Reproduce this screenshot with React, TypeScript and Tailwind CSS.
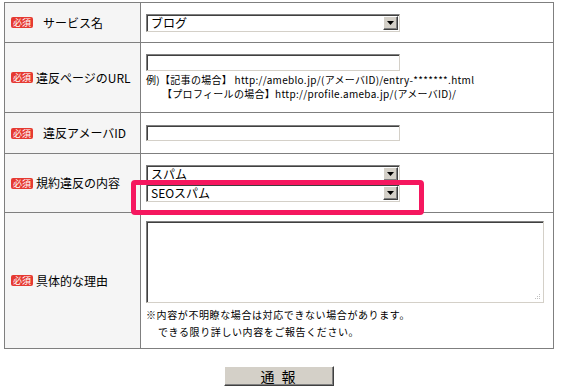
import React from 'react';

const font = "font-['Noto_Sans_CJK_JP','Noto_Sans_CJK_SC',sans-serif]";

const Badge = () => (
  <span className="inline-block bg-[#e63a32] text-white text-[9px] leading-[11px] h-[11px] px-[2px] rounded-[2px] align-middle">
    必須
  </span>
);

const Arrow = () => (
  <div className="w-[15px] h-[14px] bg-[#d4d0c8] border border-t-white border-l-white border-r-[#404040] border-b-[#404040] shadow-[inset_-1px_-1px_0_#808080] flex items-center justify-center">
    <svg width="7" height="4" viewBox="0 0 7 4">
      <path d="M0 0h7L3.5 4z" fill="#000" />
    </svg>
  </div>
);

const FakeSelect = ({ value }: { value: string }) => (
  <div className="w-[254px] h-[18px] flex items-center bg-white border border-t-[#808080] border-l-[#808080] border-r-[#d4d0c8] border-b-[#d4d0c8] shadow-[inset_1px_1px_0_#404040] pl-[4px] pr-[1px]">
    <span className="flex-1 text-[12px] leading-[14px] text-black">{value}</span>
    <Arrow />
  </div>
);

const FakeInput = ({ h = 'h-[17px]' }: { h?: string }) => (
  <div className={`w-[254px] ${h} bg-white border border-t-[#808080] border-l-[#808080] border-r-[#d4d0c8] border-b-[#d4d0c8] shadow-[inset_1px_1px_0_#404040]`} />
);

const Label = ({ text, spaced }: { text: string; spaced?: boolean }) => (
  <td className="w-[136px] bg-[#f5f5f5] border border-[#7f7f7f] pl-[6px] align-middle">
    <div className="flex items-center text-[12px] leading-[14px] text-black">
      <Badge />
      <span className={spaced ? 'ml-[10px]' : 'ml-[3px]'}>{text}</span>
    </div>
  </td>
);

export default function App() {
  return (
    <div className={`relative w-[561px] h-[390px] bg-white ${font} text-black`}>
      <div className="pt-[2px] pl-[4px]">
        <table className="border-collapse w-[550px]">
          <tbody>
            <tr className="h-[40px]">
              <Label text="サービス名" spaced />
              <td className="border border-[#7f7f7f] pl-[5px] align-middle">
                <FakeSelect value="ブログ" />
              </td>
            </tr>
            <tr className="h-[70px]">
              <Label text="違反ページのURL" />
              <td className="border border-[#7f7f7f] pl-[5px] align-middle">
                <FakeInput />
                <div className="mt-[2px] text-[10px] leading-[14px] tracking-[0.3px] whitespace-nowrap">
                  <div>例)【記事の場合】 http://ameblo.jp/(アメーバID)/entry-*******.html</div>
                  <div className="pl-[16px]">【プロフィールの場合】http://profile.ameba.jp/(アメーバID)/</div>
                </div>
              </td>
            </tr>
            <tr className="h-[41px]">
              <Label text="違反アメーバID" spaced />
              <td className="border border-[#7f7f7f] pl-[5px] align-middle">
                <FakeInput h="h-[16px]" />
              </td>
            </tr>
            <tr className="h-[59px]">
              <Label text="規約違反の内容" />
              <td className="border border-[#7f7f7f] pl-[5px] align-middle">
                <div className="flex flex-col gap-[1px]">
                  <FakeSelect value="スパム" />
                  <FakeSelect value="SEOスパム" />
                </div>
              </td>
            </tr>
            <tr className="h-[136px]">
              <Label text="具体的な理由" />
              <td className="border border-[#7f7f7f] pl-[5px] align-middle">
                <div className="w-[398px] h-[82px] bg-white border border-t-[#808080] border-l-[#808080] border-r-[#d4d0c8] border-b-[#d4d0c8] shadow-[inset_1px_1px_0_#404040] flex items-end justify-end p-[2px]">
                  <svg width="6" height="6" viewBox="0 0 6 6">
                    <rect x="4" y="0" width="1" height="1" fill="#c0c0c0" />
                    <rect x="2" y="2" width="1" height="1" fill="#c0c0c0" />
                    <rect x="4" y="2" width="1" height="1" fill="#c0c0c0" />
                    <rect x="0" y="4" width="1" height="1" fill="#c0c0c0" />
                    <rect x="2" y="4" width="1" height="1" fill="#c0c0c0" />
                    <rect x="4" y="4" width="1" height="1" fill="#c0c0c0" />
                  </svg>
                </div>
                <div className="mt-[3px] text-[10px] leading-[17px] tracking-[0.6px] whitespace-nowrap">
                  <div>※内容が不明瞭な場合は対応できない場合があります。</div>
                  <div className="pl-[12px]">できる限り詳しい内容をご報告ください。</div>
                </div>
              </td>
            </tr>
          </tbody>
        </table>
        <div className="w-[550px] flex justify-center mt-[17px]">
          <button className="w-[110px] h-[20px] bg-[#d4d0c8] border border-t-white border-l-white border-r-[#404040] border-b-[#404040] shadow-[inset_-1px_-1px_0_#808080] text-[14px] leading-[16px] tracking-[2px] text-black">
            通 報
          </button>
        </div>
      </div>
      {/* highlight annotation */}
      <div className="absolute left-[131px] top-[180px] w-[293px] h-[35px] border-[5px] border-[#f5175f] rounded-[4px]" />
    </div>
  );
}
